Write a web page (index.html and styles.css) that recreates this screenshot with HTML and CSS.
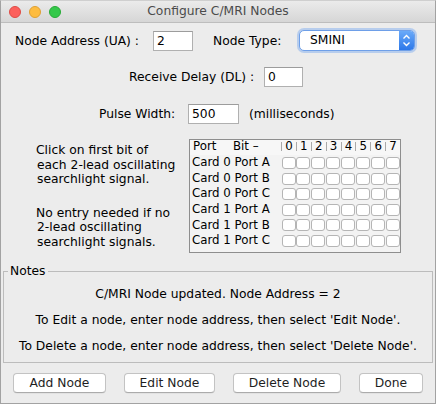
FILE: index.html
```html
<!DOCTYPE html>
<html>
<head>
<meta charset="utf-8">
<link rel="stylesheet" href="styles.css">
</head>
<body>
<div class="window">
  <div class="titlebar">
    <div class="lights">
      <span class="light red"></span>
      <span class="light yellow"></span>
      <span class="light green"></span>
    </div>
    <div class="title">Configure C/MRI Nodes</div>
    <div></div>
  </div>

  <div class="row row1">
    <span class="lbl w-addr">Node Address (UA) :</span>
    <div class="field f-addr">2</div>
    <span class="lbl w-type">Node Type:</span>
    <div class="select">
      <span class="sel-text">SMINI</span>
      <span class="sel-arrows">
        <svg width="15" height="19" viewBox="0 0 15 19">
          <polyline points="4.5,7.5 7.5,4.5 10.5,7.5" fill="none" stroke="#fff" stroke-width="1.4"/>
          <polyline points="4.5,11.5 7.5,14.5 10.5,11.5" fill="none" stroke="#fff" stroke-width="1.4"/>
        </svg>
      </span>
    </div>
  </div>

  <div class="row row2">
    <span class="lbl w-delay">Receive Delay (DL) :</span>
    <div class="field f-delay">0</div>
  </div>

  <div class="row row3">
    <span class="lbl w-pulse">Pulse Width:</span>
    <div class="field f-pulse">500</div>
    <span class="lbl unit">(milliseconds)</span>
  </div>

  <div class="middle">
    <div class="hint">
      <div class="para">
        <div>Click on first bit of</div>
        <div class="ind">each 2-lead oscillating</div>
        <div class="ind">searchlight signal.</div>
      </div>
      <div class="para para2">
        <div>No entry needed if no</div>
        <div class="ind">2-lead oscillating</div>
        <div class="ind">searchlight signals.</div>
      </div>
    </div>

    <div class="table">
      <div class="grid thead">
        <div class="hcell"><span class="hport">Port</span><span>Bit –</span></div>
        <div class="bh">0</div><div class="bh">1</div><div class="bh">2</div><div class="bh">3</div>
        <div class="bh">4</div><div class="bh">5</div><div class="bh">6</div><div class="bh">7</div>
      </div>
      <div class="grid trow">
        <div class="rl">Card 0 Port A</div>
        <div class="cb"></div><div class="cb"></div><div class="cb"></div><div class="cb"></div>
        <div class="cb"></div><div class="cb"></div><div class="cb"></div><div class="cb"></div>
      </div>
      <div class="grid trow">
        <div class="rl">Card 0 Port B</div>
        <div class="cb"></div><div class="cb"></div><div class="cb"></div><div class="cb"></div>
        <div class="cb"></div><div class="cb"></div><div class="cb"></div><div class="cb"></div>
      </div>
      <div class="grid trow">
        <div class="rl">Card 0 Port C</div>
        <div class="cb"></div><div class="cb"></div><div class="cb"></div><div class="cb"></div>
        <div class="cb"></div><div class="cb"></div><div class="cb"></div><div class="cb"></div>
      </div>
      <div class="grid trow">
        <div class="rl">Card 1 Port A</div>
        <div class="cb"></div><div class="cb"></div><div class="cb"></div><div class="cb"></div>
        <div class="cb"></div><div class="cb"></div><div class="cb"></div><div class="cb"></div>
      </div>
      <div class="grid trow">
        <div class="rl">Card 1 Port B</div>
        <div class="cb"></div><div class="cb"></div><div class="cb"></div><div class="cb"></div>
        <div class="cb"></div><div class="cb"></div><div class="cb"></div><div class="cb"></div>
      </div>
      <div class="grid trow">
        <div class="rl">Card 1 Port C</div>
        <div class="cb"></div><div class="cb"></div><div class="cb"></div><div class="cb"></div>
        <div class="cb"></div><div class="cb"></div><div class="cb"></div><div class="cb"></div>
      </div>
    </div>
  </div>

  <fieldset class="notes">
    <legend>Notes</legend>
    <div class="note">C/MRI Node updated. Node Address = 2</div>
    <div class="note">To Edit a node, enter node address, then select 'Edit Node'.</div>
    <div class="note">To Delete a node, enter node address, then select 'Delete Node'.</div>
  </fieldset>

  <div class="buttons">
    <div class="btn b-add">Add Node</div>
    <div class="btn b-edit">Edit Node</div>
    <div class="btn b-del">Delete Node</div>
    <div class="btn b-done">Done</div>
  </div>
</div>
</body>
</html>
```

FILE: styles.css
```css
html, body {
  margin: 0;
  padding: 0;
  background: #ececec;
}
body {
  font-family: "DejaVu Sans", "Liberation Sans", sans-serif;
  font-size: 12.3px;
  color: #000;
}
.window {
  width: 436px;
  height: 404px;
  box-sizing: border-box;
  border: 1px solid #a2a2a2;
  border-top-color: #cfcfcf;
  background: #ececec;
  display: flex;
  flex-direction: column;
  overflow: hidden;
}

/* Title bar */
.titlebar {
  height: 21px;
  border-bottom: 1px solid #bdbdbd;
  background: linear-gradient(#ebebeb, #d6d6d6);
  display: grid;
  grid-template-columns: 1fr auto 1fr;
  align-items: center;
  flex: none;
}
.lights {
  display: flex;
  gap: 8px;
  padding-left: 8px;
}
.light {
  width: 12px;
  height: 12px;
  box-sizing: border-box;
  border-radius: 50%;
}
.red { background: #fc605c; border: 1px solid #de4b45; }
.yellow { background: #fdbc40; border: 1px solid #dea033; }
.green { background: #34c84a; border: 1px solid #27aa36; }
.title {
  color: #4b4b4b;
  line-height: 21px;
}

/* Form rows */
.row {
  display: flex;
  align-items: center;
  flex: none;
}
.row1 { margin-top: 6px; height: 23px; padding-left: 14px; }
.row2 { margin-top: 15px; height: 20px; padding-left: 128px; }
.row3 { margin-top: 17px; height: 20px; padding-left: 98px; }
.lbl { white-space: nowrap; }
.w-addr { width: 138px; }
.w-type { width: 86px; margin-left: 20px; }
.w-delay { width: 135px; }
.w-pulse { width: 89px; }
.unit { margin-left: 10px; }

.field {
  height: 20px;
  box-sizing: border-box;
  background: #fff;
  border: 1px solid #b0b0b0;
  border-top-color: #9c9c9c;
  padding-left: 3px;
  line-height: 18px;
}
.f-addr { width: 40px; }
.f-delay { width: 39px; }
.f-pulse { width: 51px; }

.select {
  width: 116px;
  height: 21px;
  box-sizing: border-box;
  border: 1px solid #6e9fe8;
  border-radius: 5px;
  box-shadow: 0 0 0 2px rgba(120, 168, 240, 0.45);
  background: #fff;
  display: flex;
  overflow: hidden;
}
.sel-text {
  flex: 1;
  padding-left: 10px;
  line-height: 19px;
}
.sel-arrows {
  width: 15px;
  height: 19px;
  background: linear-gradient(#6aaaf9, #2d78e9);
  display: flex;
}

/* Middle */
.middle {
  display: flex;
  margin-top: 15px;
  height: 114px;
  flex: none;
}
.hint {
  width: 188px;
  box-sizing: border-box;
  padding-left: 35px;
  padding-top: 4px;
  line-height: 14.5px;
  white-space: nowrap;
}
.ind { padding-left: 1px; }
.para2 { margin-top: 19px; }

.table {
  width: 212px;
  height: 114px;
  box-sizing: border-box;
  border: 1px solid #8e8e8e;
  background: #f3f3f3;
  font-size: 11.8px;
}
.grid {
  display: grid;
  grid-template-columns: 91px repeat(8, 1fr);
}
.thead {
  height: 15.3px;
  background: #f7f7f7;
  line-height: 11px;
}
.hcell {
  display: flex;
  padding-left: 3px;
  padding-top: 1px;
  white-space: nowrap;
}
.hport { width: 40px; }
.bh {
  border-left: 1px solid #a9a9a9;
  margin-top: 1.7px;
  height: 9px;
  line-height: 9px;
  text-align: center;
}
.trow {
  height: 15.6px;
  line-height: 15.6px;
}
.rl {
  padding-left: 2px;
  white-space: nowrap;
}
.cb {
  width: 14px;
  height: 12px;
  box-sizing: border-box;
  margin-top: 1.7px;
  margin-left: 0.5px;
  background: #fff;
  border: 1px solid #b5b5b5;
  border-radius: 3px;
}

/* Notes */
.notes {
  margin: 11px 0 0 2px;
  width: 430px;
  box-sizing: border-box;
  border: 1px solid #bcbcbc;
  padding: 3px 0 3px;
  flex: none;
}
.notes legend {
  margin-left: 4px;
  padding: 0 2px;
  line-height: 14px;
  font-size: 12.3px;
}
.note {
  text-align: center;
  line-height: 26px;
  white-space: nowrap;
}

/* Buttons */
.buttons {
  display: flex;
  gap: 18px;
  margin-top: 10px;
  padding-left: 12px;
  flex: none;
}
.btn {
  height: 20px;
  box-sizing: border-box;
  background: #fff;
  border: 1px solid #c3c3c3;
  border-bottom-color: #ababab;
  border-radius: 4px;
  text-align: center;
  line-height: 18px;
  color: #1e1e1e;
  box-shadow: 0 0.5px 0.5px rgba(0, 0, 0, 0.08);
}
.b-add { width: 93px; }
.b-edit { width: 91px; }
.b-del { width: 108px; }
.b-done { width: 64px; }
```
